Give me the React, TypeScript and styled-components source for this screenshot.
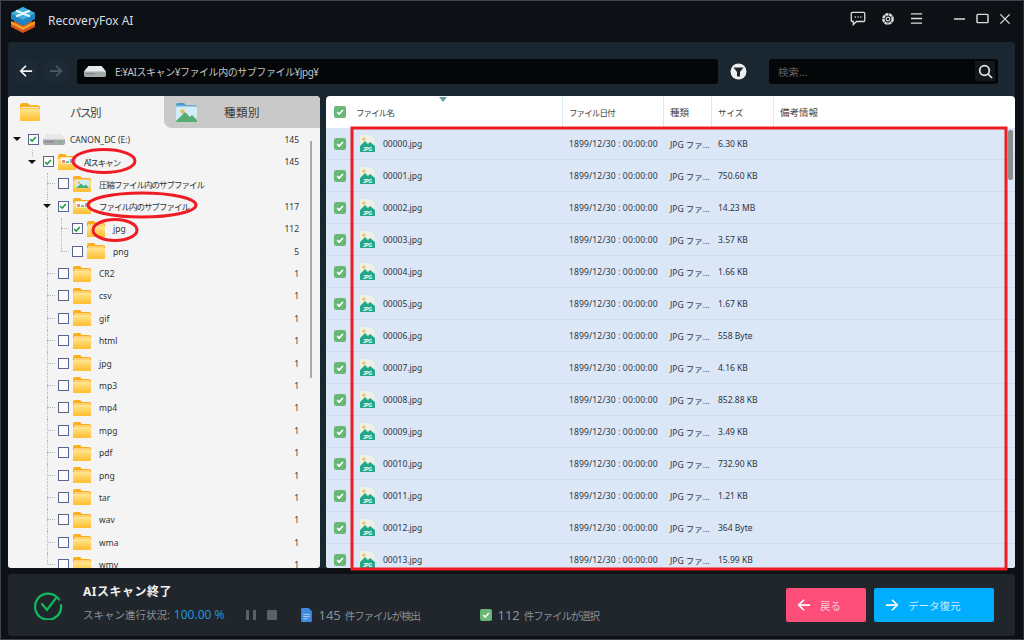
import React from "react";
import styled, { createGlobalStyle } from "styled-components";

const FONT = `"Noto Sans", "Noto Sans CJK JP", sans-serif`;

const Global = createGlobalStyle`
  html, body {
    margin: 0;
    padding: 0;
    background: #0d1115;
  }
  * {
    box-sizing: border-box;
  }
`;

const Win = styled.div`
  position: relative;
  width: 1024px;
  height: 640px;
  overflow: hidden;
  display: flex;
  flex-direction: column;
  background: #0d1115;
  border: 1px solid #3c444c;
  border-right-color: #2a3037;
  font-family: ${FONT};
`;

const TitleBar = styled.div`
  height: 41px;
  flex: none;
  display: flex;
  align-items: center;
  padding: 0 12px 3px 9px;
  color: #d8dde2;
`;

const AppName = styled.div`
  margin-left: 12px;
  font-size: 12px;
  flex: 1;
`;

const TitleIcons = styled.div`
  display: flex;
  align-items: center;
  gap: 15px;
  margin-bottom: 3px;
  color: #d9dde0;
  svg {
    display: block;
  }
`;

const WinIcons = styled(TitleIcons)`
  margin-left: 30px;
  gap: 10px;
`;

const Main = styled.div`
  margin: 0 8px 0 7px;
  height: 526px;
  flex: none;
  display: flex;
  flex-direction: column;
  background: #1a2630;
  border-radius: 3px 3px 0 0;
`;

const Toolbar = styled.div`
  height: 54px;
  flex: none;
  display: flex;
  align-items: center;
  padding: 4px 17px 0 7px;
`;

const NavButton = styled.button<{ $dim?: boolean }>`
  width: 22px;
  height: 22px;
  margin-right: 8px;
  padding: 0;
  border: 0;
  border-radius: 2px;
  background: #1d2a35;
  color: ${(p) => (p.$dim ? "#4c5a64" : "#f2f4f5")};
  display: flex;
  align-items: center;
  justify-content: center;
`;

const PathBox = styled.div`
  margin-left: 2px;
  width: 641px;
  height: 25px;
  background: #050607;
  border-radius: 3px;
  display: flex;
  align-items: center;
  padding-left: 7px;
  gap: 9px;
  color: #c2c6c9;
  font-size: 10px;
  letter-spacing: -0.45px;
`;

const FilterWrap = styled.div`
  width: 51px;
  padding-right: 11px;
  display: flex;
  justify-content: center;
`;

const SearchBox = styled.div`
  flex: 1;
  height: 25px;
  background: #050607;
  border-radius: 3px;
  display: flex;
  align-items: center;
  justify-content: space-between;
  padding: 0 3px 0 9px;
  color: #5f6468;
  font-size: 10.5px;
`;

const SearchButton = styled.div`
  width: 20px;
  height: 20px;
  background: #14181b;
  color: #e6e8ea;
  display: flex;
  align-items: center;
  justify-content: center;
`;

const Panels = styled.div`
  flex: 1;
  min-height: 0;
  display: flex;
  gap: 6px;
`;

const LeftPanel = styled.div`
  width: 312px;
  flex: none;
  position: relative;
  background: #f4f4f4;
  border-radius: 4px 4px 3px 3px;
  overflow: hidden;
  display: flex;
  flex-direction: column;
`;

const Tabs = styled.div`
  display: flex;
  height: 32px;
  flex: none;
`;

const Tab = styled.div<{ $active?: boolean }>`
  width: 156px;
  display: flex;
  align-items: center;
  padding-left: 12px;
  background: ${(p) => (p.$active ? "#f4f4f4" : "#c9c9c9")};
  border-radius: ${(p) => (p.$active ? "0" : "0 4px 0 8px")};
  color: #3a3a3a;
  font-size: 11.5px;
`;

const TabLabel = styled.span<{ $gap: number; $track: number }>`
  margin-left: ${(p) => p.$gap}px;
  letter-spacing: ${(p) => p.$track}px;
`;

const Tree = styled.div`
  flex: 1;
  min-height: 0;
  overflow: hidden;
`;

const TreeRow = styled.div<{ $level: number; $line?: number; $lineH?: string; $sub?: string }>`
  position: relative;
  height: 22.4px;
  display: flex;
  align-items: center;
  padding-left: ${(p) => [5, 20, 35, 49][p.$level]}px;
  padding-right: 21px;
  font-size: 8.5px;
  color: #333;
  &::before {
    content: "";
    display: ${(p) => (p.$line ? "block" : "none")};
    position: absolute;
    left: ${(p) => p.$line ?? 0}px;
    top: 0;
    height: ${(p) => p.$lineH ?? "100%"};
    border-left: 1px dotted #b5b5b5;
  }
  &::after {
    content: "";
    display: ${(p) => (p.$sub ? "block" : "none")};
    position: absolute;
    left: 53px;
    top: 0;
    height: ${(p) => p.$sub ?? "0"};
    border-left: 1px dotted #b5b5b5;
  }
`;

const Arrow = styled.span`
  position: relative;
  z-index: 1;
  width: 8px;
  height: 8px;
  flex: none;
  margin-right: 6.5px;
  display: flex;
  align-items: center;
  justify-content: center;
  &::after {
    content: "";
    border-left: 4px solid transparent;
    border-right: 4px solid transparent;
    border-top: 4px solid #111;
  }
`;

const Connector = styled.span`
  width: 8px;
  flex: none;
  margin: 0 2.5px 0 4px;
  border-top: 1px dotted #b5b5b5;
`;

const TreeCheck = styled.span`
  width: 11px;
  height: 11px;
  flex: none;
  border: 1px solid #59648d;
  background: #fbfbfb;
  display: flex;
  align-items: center;
  justify-content: center;
  margin-right: 4.5px;
`;

const TreeName = styled.span<{ $gap?: number; $jp?: boolean }>`
  flex: 1;
  margin-left: ${(p) => p.$gap ?? 8}px;
  white-space: nowrap;
  letter-spacing: ${(p) => (p.$jp ? "-1px" : "0")};
`;

const TreeCount = styled.span`
  font-size: 8.5px;
`;

const TreeScroll = styled.div`
  position: absolute;
  left: 302px;
  top: 45px;
  width: 2px;
  height: 237px;
  background: #a9a9a9;
`;

const RightPanel = styled.div`
  flex: 1;
  position: relative;
  background: #fff;
  border-radius: 4px 4px 3px 3px;
  overflow: hidden;
  display: flex;
  flex-direction: column;
`;

const HeaderRow = styled.div`
  position: relative;
  height: 32px;
  flex: none;
  display: flex;
  align-items: center;
  color: #444;
  font-size: 8.5px;
`;

const CheckCell = styled.div`
  width: 30px;
  flex: none;
  display: flex;
  justify-content: center;
  padding-right: 2px;
`;

const Col = styled.div<{ $w: number; $head?: boolean }>`
  width: ${(p) => p.$w}px;
  flex: none;
  height: 100%;
  display: flex;
  align-items: center;
  padding-left: 6px;
  white-space: nowrap;
  overflow: hidden;
  border-right: ${(p) => (p.$head ? "1px solid #dbe9f3" : "0")};
`;

const NameCol = styled(Col)`
  padding-left: ${(p) => (p.$head ? 0 : 4)}px;
`;

const KanaHead = styled.span`
  letter-spacing: -0.9px;
`;

const KanjiHead = styled.span`
  font-size: 9.5px;
`;

const DateText = styled.span`
  letter-spacing: 0.15px;
`;

const SortMark = styled.span`
  position: absolute;
  left: 113px;
  top: 1px;
  border-left: 4.5px solid transparent;
  border-right: 4.5px solid transparent;
  border-top: 5px solid #6a99a8;
`;

const GreenBox = styled.span<{ $size?: number }>`
  width: ${(p) => p.$size ?? 12}px;
  height: ${(p) => p.$size ?? 12}px;
  flex: none;
  display: inline-flex;
  align-items: center;
  justify-content: center;
  background: #69b878;
  border-radius: 2px;
`;

const FileRow = styled.div`
  height: 32px;
  flex: none;
  display: flex;
  align-items: center;
  background: #dbe7f7;
  border-bottom: 1px solid #c9dcf3;
  color: #2c3440;
  font-size: 8.5px;
`;

const FileName = styled.span`
  margin-left: 8px;
`;

const FileScroll = styled.div`
  position: absolute;
  right: 2px;
  top: 34px;
  width: 5px;
  height: 50px;
  border-radius: 2px;
  background: #8e8e8e;
`;

const Footer = styled.div`
  margin: 6px 8px 0 7px;
  height: 62px;
  flex: none;
  background: #21262c;
  border-radius: 3px;
  display: flex;
  align-items: center;
  padding: 0 21px 0 25px;
`;

const FixedSvg = styled.svg`
  flex: none;
`;

const Info = styled.div`
  margin-left: 20px;
  flex: 1;
  display: flex;
  flex-direction: column;
  gap: 9px;
  padding-bottom: 3px;
`;

const Done = styled.div`
  color: #eef0f1;
  font-size: 12px;
  font-weight: 700;
  letter-spacing: 0.5px;
  line-height: 14px;
`;

const Status = styled.div`
  display: flex;
  align-items: center;
  color: #8b9196;
  font-size: 10.5px;
  line-height: 14px;
  white-space: nowrap;
`;

const Percent = styled.span`
  color: #1f93d8;
  margin-left: 4px;
  font-size: 12px;
`;

const Pause = styled.span`
  margin-left: 22px;
  width: 10px;
  height: 10px;
  border-left: 3px solid #5d6266;
  border-right: 3px solid #5d6266;
`;

const Stop = styled.span`
  margin-left: 11px;
  width: 10px;
  height: 10px;
  background: #5d6266;
  border-radius: 1px;
`;

const StatGroup = styled.span<{ $w: number; $left?: number; $gap: number }>`
  width: ${(p) => p.$w}px;
  margin-left: ${(p) => p.$left ?? 0}px;
  display: flex;
  align-items: center;
  gap: ${(p) => p.$gap}px;
  letter-spacing: -1.1px;
`;

const StatNum = styled.span`
  font-size: 13px;
  margin-right: 4px;
  letter-spacing: 0;
`;

const Action = styled.button<{ $bg: string; $w: number; $ink: string }>`
  width: ${(p) => p.$w}px;
  height: 34px;
  border: 0;
  border-radius: 2px;
  background: ${(p) => p.$bg};
  color: ${(p) => p.$ink};
  font-family: ${FONT};
  font-size: 10.5px;
  display: flex;
  align-items: center;
  padding: 0 0 0 11px;
  gap: 9px;
  svg {
    color: #fff;
  }
  & + & {
    margin-left: 8px;
  }
`;

const Annotations = styled.svg`
  position: absolute;
  left: -1px;
  top: -1px;
  width: 1024px;
  height: 640px;
  pointer-events: none;
`;

const files: [string, string][] = [
  ["00000.jpg", "6.30 KB"],
  ["00001.jpg", "750.60 KB"],
  ["00002.jpg", "14.23 MB"],
  ["00003.jpg", "3.57 KB"],
  ["00004.jpg", "1.66 KB"],
  ["00005.jpg", "1.67 KB"],
  ["00006.jpg", "558 Byte"],
  ["00007.jpg", "4.16 KB"],
  ["00008.jpg", "852.88 KB"],
  ["00009.jpg", "3.49 KB"],
  ["00010.jpg", "732.90 KB"],
  ["00011.jpg", "1.21 KB"],
  ["00012.jpg", "364 Byte"],
  ["00013.jpg", "15.99 KB"],
];

const plainFolders = ["CR2", "csv", "gif", "html", "jpg", "mp3", "mp4", "mpg", "pdf", "png", "tar", "wav", "wma", "wmv"];

const Logo = () => (
  <svg width="26" height="26" viewBox="2 1 24 26">
    <path d="M14 11 L26 17 L26 21 L14 27 L2 21 L2 17 Z" fill="#d9531e" />
    <path d="M2 15 L14 21 L26 15 L26 18 L14 24 L2 18 Z" fill="#f0a020" />
    <path d="M14 1 L26 7 L26 13 L14 20 L2 13 L2 7 Z" fill="#1f84c4" />
    <path d="M14 1 L26 7 L14 14 L2 7 Z" fill="#3fb0e0" />
    <path d="M8 5 L20 10 M20 5 L8 10" stroke="#e8f6fc" strokeWidth="2.4" strokeLinecap="round" />
  </svg>
);

const Check = ({ size = 8, color = "#fff" }: { size?: number; color?: string }) => (
  <svg width={size} height={size} viewBox="0 0 10 10">
    <path d="M1.5 5.2 L4 7.6 L8.6 2.4" fill="none" stroke={color} strokeWidth="1.9" />
  </svg>
);

const Folder = ({ kind, w = 18 }: { kind?: "chart" | "image"; w?: number }) => (
  <FixedSvg width={w} height={w} viewBox="0 0 18 18">
    <defs>
      <linearGradient id="folderFill" x1="0" y1="0" x2="0" y2="1">
        <stop offset="0" stopColor="#ffe692" />
        <stop offset="1" stopColor="#ffbe2e" />
      </linearGradient>
    </defs>
    <path d="M0 3 Q0 1 2 1 H7 L9 3 H16 Q18 3 18 5 V16 Q18 17 16 17 H2 Q0 17 0 16 Z" fill="#fcae1a" />
    <path d="M0 6 H18 V15.5 Q18 17 16 17 H2 Q0 17 0 15.5 Z" fill="url(#folderFill)" />
    <rect x="1" y="4.5" width="16" height="1" fill="#fff3cf" />
    {kind === "chart" && (
      <>
        <rect x="3" y="4.5" width="14" height="6" fill="#fbfbfb" />
        <rect x="4" y="7" width="3" height="3" fill="#e88a8a" />
        <rect x="8" y="8" width="3" height="2" fill="#7cc488" />
        <rect x="12" y="6" width="3" height="4" fill="#8ea6e6" />
      </>
    )}
    {kind === "image" && (
      <>
        <rect x="3" y="5" width="13" height="8" fill="#d4ecf8" />
        <circle cx="6" cy="7.5" r="1.2" fill="#f5b53a" />
        <path d="M3 13 L8 8.5 L11 11 L13 9.5 L16 13 Z" fill="#4fae77" />
      </>
    )}
  </FixedSvg>
);

const ImageFolder = () => (
  <svg width="21" height="21" viewBox="0 0 21 21">
    <path d="M0 3 Q0 1 2 1 H8 L10 3 H19 Q21 3 21 5 V19 Q21 20 19 20 H2 Q0 20 0 19 Z" fill="#4f96c8" />
    <rect x="0" y="5" width="21" height="15" rx="1" fill="#d4ecf8" />
    <rect x="0" y="3.6" width="21" height="1.4" fill="#9fcbe6" />
    <circle cx="6.5" cy="9.5" r="2" fill="#f5b53a" />
    <path d="M0 19 L9 10 L14 15 L16 13 L21 18 V20 H0 Z" fill="#56ad72" />
  </svg>
);

const Drive = ({ w = 22 }: { w?: number }) => (
  <FixedSvg width={w} height={Math.round(w * 0.55)} viewBox="0 0 24 13">
    <path d="M5 1 H19 L24 7 V11 Q24 13 22 13 H2 Q0 13 0 11 V7 Z" fill="#a6a9ac" />
    <path d="M5 1 H19 L24 7 H0 Z" fill="#e8e9ea" />
    <rect x="18" y="9" width="2" height="2" fill="#57c75f" />
    <rect x="2" y="9" width="10" height="1" fill="#75787b" />
  </FixedSvg>
);

const JpgIcon = () => (
  <FixedSvg width="15" height="17" viewBox="0 0 15 17">
    <path d="M0 0 H11 L15 4 V17 H0 Z" fill="#eef0e6" />
    <circle cx="4" cy="4" r="1.6" fill="#f2bf45" />
    <path d="M0 11 L5 6 L8 9 L10 7 L15 11 V17 H0 Z" fill="#21a98c" />
    <text x="7.5" y="15.6" textAnchor="middle" fontSize="4.6" fontWeight="700" fill="#fff" fontFamily="Liberation Sans">
      JPG
    </text>
  </FixedSvg>
);

const ArrowIcon = ({ dir = "left", size = 14, width = 2 }: { dir?: "left" | "right"; size?: number; width?: number }) => (
  <svg width={size} height={size} viewBox="0 0 16 16" fill="none" stroke="currentColor" strokeWidth={width}>
    {dir === "left" ? <path d="M15 8 H2 M8 2 L2 8 L8 14" /> : <path d="M1 8 H14 M8 2 L14 8 L8 14" />}
  </svg>
);

type NodeProps = {
  level: number;
  open?: boolean;
  line?: number;
  lineH?: string;
  sub?: string;
  checked?: boolean;
  kind?: "chart" | "image";
  name: string;
  jp?: boolean;
  count?: string;
};

const TreeNode = ({ level, open, line, lineH, sub, checked, kind, name, jp, count }: NodeProps) => (
  <TreeRow $level={level} $line={line} $lineH={lineH} $sub={sub}>
    {open ? <Arrow /> : <Connector />}
    <TreeCheck>{checked && <Check size={8} color="#1e9e42" />}</TreeCheck>
    <Folder kind={kind} />
    <TreeName $jp={jp}>{name}</TreeName>
    <TreeCount>{count}</TreeCount>
  </TreeRow>
);

export default function App() {
  return (
    <Win>
      <Global />
      <TitleBar>
        <Logo />
        <AppName>RecoveryFox AI</AppName>
        <TitleIcons>
          <svg width="16" height="15" viewBox="0 0 17 16" fill="none" stroke="currentColor" strokeWidth="1.4">
            <path d="M2.5 1.5 H14.5 Q15.7 1.5 15.7 2.7 V10 Q15.7 11.2 14.5 11.2 H7 L3.5 14.5 V11.2 H2.5 Q1.3 11.2 1.3 10 V2.7 Q1.3 1.5 2.5 1.5 Z" />
            <path d="M5 6.4 H6.2 M8 6.4 H9.2 M11 6.4 H12.2" strokeWidth="1.5" />
          </svg>
          <svg width="14" height="14" viewBox="0 0 15 15" fill="none" stroke="currentColor">
            <circle cx="7.5" cy="7.5" r="5" strokeWidth="2.6" strokeDasharray="3.4 0.6" />
            <circle cx="7.5" cy="7.5" r="2" strokeWidth="1.2" />
          </svg>
          <svg width="13" height="13" viewBox="0 0 14 13" stroke="currentColor" strokeWidth="1.4">
            <path d="M1 1.5 H13 M1 6.5 H13 M1 11.5 H13" />
          </svg>
        </TitleIcons>
        <WinIcons>
          <svg width="13" height="14" viewBox="0 0 14 14" stroke="currentColor" strokeWidth="1.6">
            <path d="M1 7 H13" />
          </svg>
          <svg width="13" height="11" viewBox="0 0 14 12" fill="none" stroke="currentColor" strokeWidth="1.6">
            <rect x="1" y="1.5" width="12" height="9" rx="1" />
          </svg>
          <svg width="12" height="12" viewBox="0 0 13 13" stroke="currentColor" strokeWidth="1.5">
            <path d="M1.5 1.5 L11.5 11.5 M11.5 1.5 L1.5 11.5" />
          </svg>
        </WinIcons>
      </TitleBar>

      <Main>
        <Toolbar>
          <NavButton>
            <ArrowIcon />
          </NavButton>
          <NavButton $dim>
            <ArrowIcon dir="right" />
          </NavButton>
          <PathBox>
            <Drive />
            <span>E:¥AIスキャン¥ファイル内のサブファイル¥jpg¥</span>
          </PathBox>
          <FilterWrap>
            <svg width="17" height="17" viewBox="0 0 17 17">
              <circle cx="8.5" cy="8.5" r="8" fill="#eceff0" />
              <path d="M3.5 4.5 H13.5 L10 9 V13.5 H7 V9 Z" fill="#1a2630" />
            </svg>
          </FilterWrap>
          <SearchBox>
            <span>検索...</span>
            <SearchButton>
              <svg width="15" height="15" viewBox="0 0 15 15" fill="none" stroke="currentColor" strokeWidth="1.7">
                <circle cx="6.5" cy="6.5" r="4.8" />
                <path d="M10 10 L14 14" />
              </svg>
            </SearchButton>
          </SearchBox>
        </Toolbar>

        <Panels>
          <LeftPanel>
            <Tabs>
              <Tab $active>
                <Folder w={20} />
                <TabLabel $gap={30} $track={-1.5}>
                  パス別
                </TabLabel>
              </Tab>
              <Tab>
                <ImageFolder />
                <TabLabel $gap={27} $track={0.5}>
                  種類別
                </TabLabel>
              </Tab>
            </Tabs>
            <Tree>
              <TreeRow $level={0}>
                <Arrow />
                <TreeCheck>
                  <Check size={8} color="#1e9e42" />
                </TreeCheck>
                <Drive />
                <TreeName $gap={5}>CANON_DC (E:)</TreeName>
                <TreeCount>145</TreeCount>
              </TreeRow>
              <TreeNode level={1} open checked kind="chart" name="AIスキャン" jp count="145" line={24} lineH="7px" />
              <TreeNode level={2} line={39} kind="image" name="圧縮ファイル内のサブファイル" jp />
              <TreeNode level={2} open line={39} checked kind="chart" name="ファイル内のサブファイル" jp count="117" />
              <TreeNode level={3} line={39} sub="100%" checked name="jpg" count="112" />
              <TreeNode level={3} line={39} sub="50%" name="png" count="5" />
              {plainFolders.map((f, i) => (
                <TreeNode key={f + i} level={2} line={39} lineH={i === plainFolders.length - 1 ? "50%" : "100%"} name={f} count="1" />
              ))}
            </Tree>
            <TreeScroll />
          </LeftPanel>

          <RightPanel>
            <HeaderRow>
              <CheckCell>
                <GreenBox>
                  <Check />
                </GreenBox>
              </CheckCell>
              <NameCol $w={207} $head>
                <KanaHead>ファイル名</KanaHead>
              </NameCol>
              <Col $w={101} $head>
                <KanaHead>ファイル日付</KanaHead>
              </Col>
              <Col $w={48} $head>
                <KanjiHead>種類</KanjiHead>
              </Col>
              <Col $w={62} $head>
                サイズ
              </Col>
              <Col $w={120}>
                <KanjiHead>備考情報</KanjiHead>
              </Col>
              <SortMark />
            </HeaderRow>
            {files.map(([name, size]) => (
              <FileRow key={name}>
                <CheckCell>
                  <GreenBox>
                    <Check />
                  </GreenBox>
                </CheckCell>
                <NameCol $w={207}>
                  <JpgIcon />
                  <FileName>{name}</FileName>
                </NameCol>
                <Col $w={101}>
                  <DateText>1899/12/30 : 00:00:00</DateText>
                </Col>
                <Col $w={48}>JPG ファ...</Col>
                <Col $w={62}>{size}</Col>
              </FileRow>
            ))}
            <FileScroll />
          </RightPanel>
        </Panels>
      </Main>

      <Footer>
        <FixedSvg width="30" height="30" viewBox="0 0 30 30" fill="none" stroke="#10b95c" strokeWidth="2.2">
          <path d="M26 9.5 A13 13 0 1 0 28 15" strokeLinecap="round" />
          <path d="M9 14 L14 20 L23 8" strokeLinecap="round" />
        </FixedSvg>
        <Info>
          <Done>AIスキャン終了</Done>
          <Status>
            スキャン進行状況:
            <Percent>100.00 %</Percent>
            <Pause />
            <Stop />
            <StatGroup $w={179} $left={24} $gap={6}>
              <svg width="11" height="14" viewBox="0 0 10 13">
                <path d="M0 1 Q0 0 1 0 H7 L10 3 V12 Q10 13 9 13 H1 Q0 13 0 12 Z" fill="#3f8ae0" />
                <path d="M2 6 H8 M2 8 H8 M2 10 H6" stroke="#cfe3fa" strokeWidth="0.7" />
              </svg>
              <span>
                <StatNum>145</StatNum>件ファイルが検出
              </span>
            </StatGroup>
            <StatGroup $w={130} $gap={5}>
              <GreenBox $size={12}>
                <Check size={8} />
              </GreenBox>
              <span>
                <StatNum>112</StatNum>件ファイルが選択
              </span>
            </StatGroup>
          </Status>
        </Info>
        <Action $bg="#fd4d79" $w={80} $ink="#f7cfdc">
          <ArrowIcon />
          <span>戻る</span>
        </Action>
        <Action $bg="#00aeff" $w={120} $ink="#c6ecff">
          <ArrowIcon dir="right" />
          <span>データ復元</span>
        </Action>
      </Footer>

      <Annotations viewBox="0 0 1024 640" fill="none" stroke="#ee1c25">
        <rect x="352" y="128" width="654" height="441" strokeWidth="3" />
        <ellipse cx="104" cy="161" rx="31" ry="11.5" strokeWidth="3" />
        <ellipse cx="142" cy="205" rx="54" ry="12" strokeWidth="3" />
        <ellipse cx="115" cy="230" rx="22" ry="10.5" strokeWidth="3" />
      </Annotations>
    </Win>
  );
}
